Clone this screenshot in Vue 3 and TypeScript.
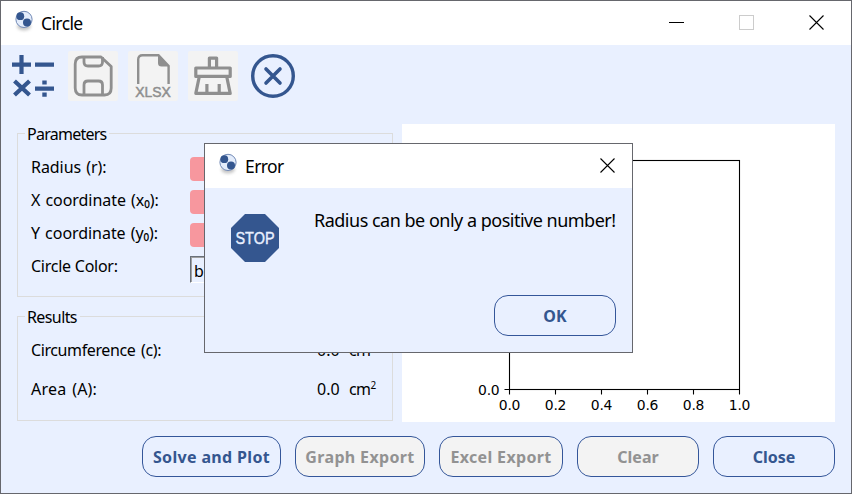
<script setup lang="ts">
interface Action {
  label: string
  width: number
  disabled: boolean
}

const fields = [
  { label: 'Radius (r):', tone: 'wide' },
  { label: 'X coordinate (x₀):', tone: 'wide' },
  { label: 'Y coordinate (y₀):', tone: 'wide' },
]

const results = [
  { label: 'Circumference (c):', tone: 'tight', value: '0.0', unit: 'cm', power: '' },
  { label: 'Area (A):', tone: 'loose', value: '0.0', unit: 'cm', power: '2' },
]

const actions: Action[] = [
  { label: 'Solve and Plot', width: 139, disabled: false },
  { label: 'Graph Export', width: 130, disabled: true },
  { label: 'Excel Export', width: 124, disabled: true },
  { label: 'Clear', width: 122, disabled: true },
  { label: 'Close', width: 122, disabled: false },
]

const ticks = [0, 0.2, 0.4, 0.6, 0.8, 1]
const tickX = (t: number): number => Math.round(107 + t * 230) + 0.5
const tickY = (t: number): number => Math.round(265 - t * 229) + 0.5
</script>

<template>
  <div class="window">
    <header class="titlebar">
      <svg class="logo" width="22" height="24" viewBox="0 0 22 24">
        <ellipse class="shadow" cx="11" cy="17.5" rx="7" ry="4" />
        <circle cx="11" cy="10.4" r="8.1" fill="#e3ecfb" stroke="#7088b5" stroke-width="1" />
        <circle cx="7.3" cy="7.2" r="3.9" fill="#34568f" />
        <circle cx="14" cy="13.6" r="4" fill="#34568f" />
      </svg>
      <span class="title">Circle</span>
      <div class="controls">
        <svg width="16" height="16"><path d="M0 7.5H15" stroke="#000" /></svg>
        <svg width="16" height="16"><rect x=".5" y=".5" width="14" height="14" fill="none" stroke="#ccc" /></svg>
        <svg width="16" height="16"><path d="M.5 .5L14.5 14.5M14.5 .5L.5 14.5" stroke="#000" stroke-width="1.1" /></svg>
      </div>
    </header>

    <nav class="toolbar">
      <button class="tool">
        <svg width="50" height="50" fill="none" stroke="#34568f" stroke-width="4.2">
          <path d="M4 13.7H23M13.5 4V23M27 13.7H46M27 37.7H46M6.5 30L21.5 44M21.5 30L6.5 44" />
          <path d="M34.3 31.5H38.7M34.3 43.7H38.7" />
        </svg>
      </button>
      <button class="tool off">
        <svg width="50" height="50" fill="none" stroke="#8f8f8f" stroke-width="2.8">
          <path d="M14 6H33L43.2 15.5V37Q43.2 44 36.5 44H14Q7.2 44 7.2 37V13Q7.2 6 14 6Z" stroke-linejoin="round" />
          <path d="M16 6V11Q16 15 20 15H30.5Q34.5 15 34.5 11V6M16 44V34Q16 30 20 30H30.5Q34.5 30 34.5 34V44" />
        </svg>
      </button>
      <button class="tool off">
        <svg width="50" height="50" fill="none" stroke="#8f8f8f" stroke-width="2.4">
          <path d="M10.2 33V8.5Q10.2 4.3 14.5 4.3H30.5L40.6 15V33" />
          <path d="M30 4L41 15.5H33.5Q30 15.5 30 12Z" fill="#8f8f8f" stroke="none" />
          <text x="7.3" y="46.2" textLength="35.6" lengthAdjust="spacingAndGlyphs">XLSX</text>
        </svg>
      </button>
      <button class="tool off">
        <svg width="50" height="50" fill="none" stroke="#8f8f8f" stroke-width="3.2" stroke-linejoin="round">
          <path d="M21.4 17V7.1H28.6V17M7.8 25.4V17H42.2V25.4ZM11.2 26L7.8 42.4H42.2L38.8 26M18.9 42V33M31.2 42V33" />
        </svg>
      </button>
      <button class="tool">
        <svg width="50" height="50" fill="none" stroke="#34568f">
          <circle cx="25" cy="25" r="20.3" stroke-width="3.4" />
          <path d="M18 18L32 32M32 18L18 32" stroke-width="3.6" stroke-linecap="round" />
        </svg>
      </button>
    </nav>

    <main class="content">
      <section class="forms">
        <div class="group parameters">
          <h2>Parameters</h2>
          <label v-for="f in fields" :key="f.label" class="row">
            <span :class="f.tone">{{ f.label }}</span>
            <i class="input" />
          </label>
          <label class="row">
            <span>Circle Color:</span>
            <b class="combo">blue</b>
          </label>
        </div>
        <div class="group results">
          <h2>Results</h2>
          <div v-for="r in results" :key="r.label" class="result">
            <span class="name" :class="r.tone">{{ r.label }}</span>
            <span class="value">{{ r.value }}</span>
            <span class="unit">{{ r.unit }}<sup>{{ r.power }}</sup></span>
          </div>
        </div>
      </section>
      <svg class="plot" width="433" height="298">
        <rect x="107.5" y="36.5" width="230" height="229" fill="none" stroke="#000" stroke-width="1.1" />
        <g v-for="t in ticks" :key="t">
          <path :d="`M${tickX(t)} 265.5v5M107.5 ${tickY(t)}h-5`" stroke="#000" stroke-width="1.1" />
          <text :x="tickX(t)" y="286" text-anchor="middle">{{ t.toFixed(1) }}</text>
        </g>
        <text x="97.5" y="270.8" text-anchor="end">0.0</text>
      </svg>
    </main>

    <footer class="actions">
      <button
        v-for="a in actions"
        :key="a.label"
        class="pill"
        :class="{ off: a.disabled, phrase: a.label.includes(' ') }"
        :style="{ width: a.width + 'px' }"
      >{{ a.label }}</button>
    </footer>

    <div class="dialog">
      <header class="titlebar">
        <svg class="logo" width="22" height="24" viewBox="0 0 22 24">
          <ellipse class="shadow" cx="11" cy="17.5" rx="7" ry="4" />
          <circle cx="11" cy="10.4" r="8.1" fill="#e3ecfb" stroke="#7088b5" stroke-width="1" />
          <circle cx="7.3" cy="7.2" r="3.9" fill="#34568f" />
          <circle cx="14" cy="13.6" r="4" fill="#34568f" />
        </svg>
        <span class="title">Error</span>
        <div class="controls">
          <svg width="16" height="16"><path d="M.5 .5L14.5 14.5M14.5 .5L.5 14.5" stroke="#000" stroke-width="1.1" /></svg>
        </div>
      </header>
      <div class="message">
        <svg class="stop" width="48" height="48">
          <path d="M14 0H34L48 14V34L34 48H14L0 34V14Z" fill="#34568f" />
          <text x="4.5" y="30" textLength="39" lengthAdjust="spacingAndGlyphs">STOP</text>
        </svg>
        <p>Radius can be only a positive number!</p>
      </div>
      <div class="confirm"><button class="pill ok">OK</button></div>
    </div>
  </div>
</template>

<style>
body {
  margin: 0;
  overflow: hidden;
}
</style>

<style scoped>
* {
  box-sizing: border-box;
}

.window {
  position: relative;
  width: 852px;
  height: 494px;
  border: 1px solid #66676d;
  background: #e9f0ff;
  color: #000;
  font: 16px/20px "Noto Sans", sans-serif;
  overflow: hidden;
}

.titlebar {
  display: flex;
  height: 44px;
  background: #fff;
  padding: 8px 26px 0 12px;
}

.logo {
  flex: none;
}

.shadow {
  fill: #999;
  opacity: 0.55;
  filter: blur(1.5px);
}

.title {
  margin: 3px 0 0 6px;
  font-size: 17.5px;
  line-height: 22px;
  letter-spacing: -0.6px;
}

.controls {
  display: flex;
  gap: 54px;
  margin: 6px 0 0 auto;
}

.toolbar {
  display: flex;
  gap: 10px;
  padding: 6px 7px 0;
}

.tool {
  width: 50px;
  height: 50px;
  border: 0;
  padding: 0;
  background: transparent;
}

.tool svg {
  display: block;
}

.tool.off {
  background: #f3f3f3;
  border-radius: 2px;
}

.tool text {
  font: 15px "Liberation Sans", sans-serif;
  fill: #8f8f8f;
  stroke: #8f8f8f;
  stroke-width: 0.5;
}

.content {
  display: flex;
  gap: 9px;
  padding: 23px 16px 0;
}

.forms {
  width: 376px;
  padding-top: 9px;
}

.group {
  border: 1px solid #dcdcdc;
}

.group h2 {
  width: max-content;
  height: 20px;
  margin: -10px 0 0 7px;
  padding: 0 3px 0 2px;
  background: #e9f0ff;
  font-size: 16px;
  font-weight: 400;
  line-height: 20px;
  letter-spacing: -0.75px;
}

.parameters {
  height: 164px;
}

.row {
  display: flex;
  height: 33px;
  padding: 13px 20px 0 13px;
  letter-spacing: -0.25px;
}

.row > span {
  width: 159px;
  white-space: nowrap;
}

.row > .wide {
  letter-spacing: -0.05px;
  word-spacing: 1px;
}

.tight {
  letter-spacing: -0.4px;
  word-spacing: 2px;
}

.loose {
  letter-spacing: 0.2px;
  word-spacing: 1.5px;
}

.input {
  flex: 1;
  height: 24px;
  border-radius: 4px;
  background: #f7979e;
}

.combo {
  flex: 1;
  height: 27px;
  padding: 4px 3px;
  border: 1px solid #69707a;
  border-bottom-color: #fff;
  box-shadow: inset 1px 1px #a0a0a0;
  font-weight: 400;
}

.results {
  height: 105px;
  margin-top: 19px;
}

.results h2 {
  letter-spacing: -0.6px;
}

.result {
  display: flex;
  height: 39px;
  padding: 13px 16px 0 13px;
}

.name {
  width: 286px;
}

.value {
  width: 32px;
}

.unit {
  letter-spacing: -0.6px;
}

.unit sup {
  font-size: 10px;
  line-height: 0;
}

.plot {
  background: #fff;
}

.plot text {
  font: 13.9px "DejaVu Sans", sans-serif;
  letter-spacing: -0.2px;
}

.actions {
  display: flex;
  gap: 14px;
  justify-content: flex-end;
  padding: 14px 16px 0;
}

.pill {
  height: 41px;
  padding: 1px 0 0;
  border: 1px solid #34569a;
  border-radius: 14px;
  background: #e9f0ff;
  color: #34568f;
  font: 700 16px/20px "Noto Sans", sans-serif;
  white-space: nowrap;
}

.pill.phrase {
  letter-spacing: 0.35px;
}

.pill.off {
  background: #f3f3f3;
  color: #929292;
}

.dialog {
  position: absolute;
  left: 203px;
  top: 142px;
  width: 429px;
  height: 210px;
  border: 1px solid #66676d;
  background: #e9f0ff;
}

.dialog .titlebar {
  padding-right: 16px;
}

.message {
  display: flex;
  height: 107px;
  padding: 26px 16px 0 26px;
}

.stop {
  flex: none;
}

.stop text {
  font: 16px "Liberation Sans", sans-serif;
  fill: #e9f0ff;
  stroke: #e9f0ff;
  stroke-width: 0.4;
}

.message p {
  margin: -6px 0 0 35px;
  font-size: 18px;
  line-height: 24px;
  letter-spacing: -0.5px;
  white-space: nowrap;
}

.confirm {
  display: flex;
  justify-content: flex-end;
  padding-right: 16px;
}

.ok {
  width: 122px;
}
</style>
